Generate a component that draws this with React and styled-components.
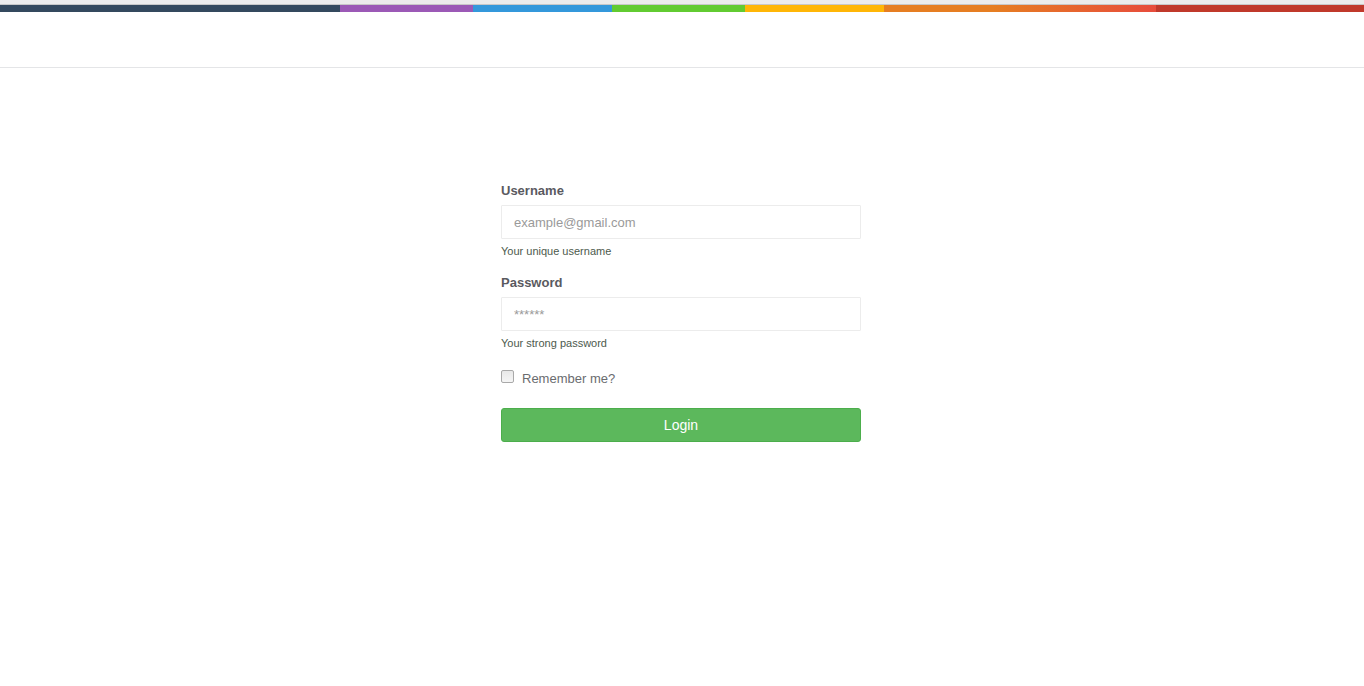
import React from "react";
import styled, { createGlobalStyle } from "styled-components";

const GlobalStyle = createGlobalStyle`
  html, body {
    margin: 0;
    padding: 0;
    background: #fff;
    font-family: "Liberation Sans", Arial, sans-serif;
  }
`;

const stripes = [
  { width: 340, color: "#34495e" },
  { width: 133, color: "#9b59b6" },
  { width: 139, color: "#3498db" },
  { width: 133, color: "#62cb31" },
  { width: 139, color: "#ffb606" },
  { width: 272, color: "linear-gradient(to right, #e67e22 0%, #e67e22 40%, #e74c3c 100%)" },
  { width: 208, color: "#c0392b" },
];

function ColorBar() {
  return (
    <TopStrip>
      <Stripes>
        {stripes.map((s, i) => (
          <Stripe key={i} $width={s.width} $color={s.color} />
        ))}
      </Stripes>
    </TopStrip>
  );
}

const Field = ({ label, placeholder, help, type = "text" }) => (
  <FieldGroup>
    <Label>{label}</Label>
    <Input type={type} placeholder={placeholder} />
    <Help>{help}</Help>
  </FieldGroup>
);

export default function App() {
  return (
    <>
      <GlobalStyle />
      <ColorBar />
      <Header />
      <Main>
        <Form onSubmit={(e) => e.preventDefault()}>
          <Field
            label="Username"
            placeholder="example@gmail.com"
            help="Your unique username"
          />
          <Field label="Password" placeholder="******" help="Your strong password" />
          <CheckRow>
            <Checkbox type="checkbox" />
            <span>Remember me?</span>
          </CheckRow>
          <LoginButton type="submit">Login</LoginButton>
        </Form>
      </Main>
    </>
  );
}

const TopStrip = styled.div`
  background: #ececec;
  padding-top: 4px;
`;

const Stripes = styled.div`
  display: flex;
  height: 7px;
  border-top: 1px solid #c8c8c8;
`;

const Stripe = styled.div`
  flex: ${(p) => p.$width} 0 0;
  background: ${(p) => p.$color};
`;

const Header = styled.div`
  height: 55px;
  border-bottom: 1px solid #e4e5e7;
  background: #fff;
`;

const Main = styled.div`
  display: flex;
  justify-content: center;
  padding-top: 114px;
  padding-right: 2px;
`;

const Form = styled.form`
  width: 360px;
  display: flex;
  flex-direction: column;
`;

const FieldGroup = styled.div`
  display: flex;
  flex-direction: column;
  margin-bottom: 17px;
`;

const Label = styled.label`
  font-size: 13px;
  font-weight: bold;
  color: #5a5a5f;
  line-height: 18px;
  margin-bottom: 5px;
`;

const Input = styled.input`
  box-sizing: border-box;
  height: 34px;
  width: 100%;
  border: 1px solid #ececec;
  border-radius: 1px;
  padding: 0 12px;
  font-family: inherit;
  font-size: 13px;
  color: #555;
  outline: none;

  &::placeholder {
    color: #9a9a9a;
  }
`;

const Help = styled.span`
  font-size: 11px;
  color: #4d5a4d;
  margin-top: 6px;
  line-height: 12px;
`;

const CheckRow = styled.label`
  display: flex;
  align-items: center;
  gap: 8px;
  font-size: 13px;
  color: #6a6c6f;
  margin-top: 3px;
  margin-bottom: 21px;
  height: 18px;
`;

const Checkbox = styled.input`
  appearance: none;
  box-sizing: border-box;
  margin: 0 0 3px 0;
  width: 13px;
  height: 13px;
  border: 1px solid #a9a9a9;
  border-radius: 2px;
  background: linear-gradient(#e8e8e8, #f5f5f5);
`;

const LoginButton = styled.button`
  height: 34px;
  border: 1px solid #4cae4c;
  border-radius: 3px;
  background: #5cb85c;
  color: #fff;
  font-family: inherit;
  font-size: 14px;
  cursor: pointer;
`;
